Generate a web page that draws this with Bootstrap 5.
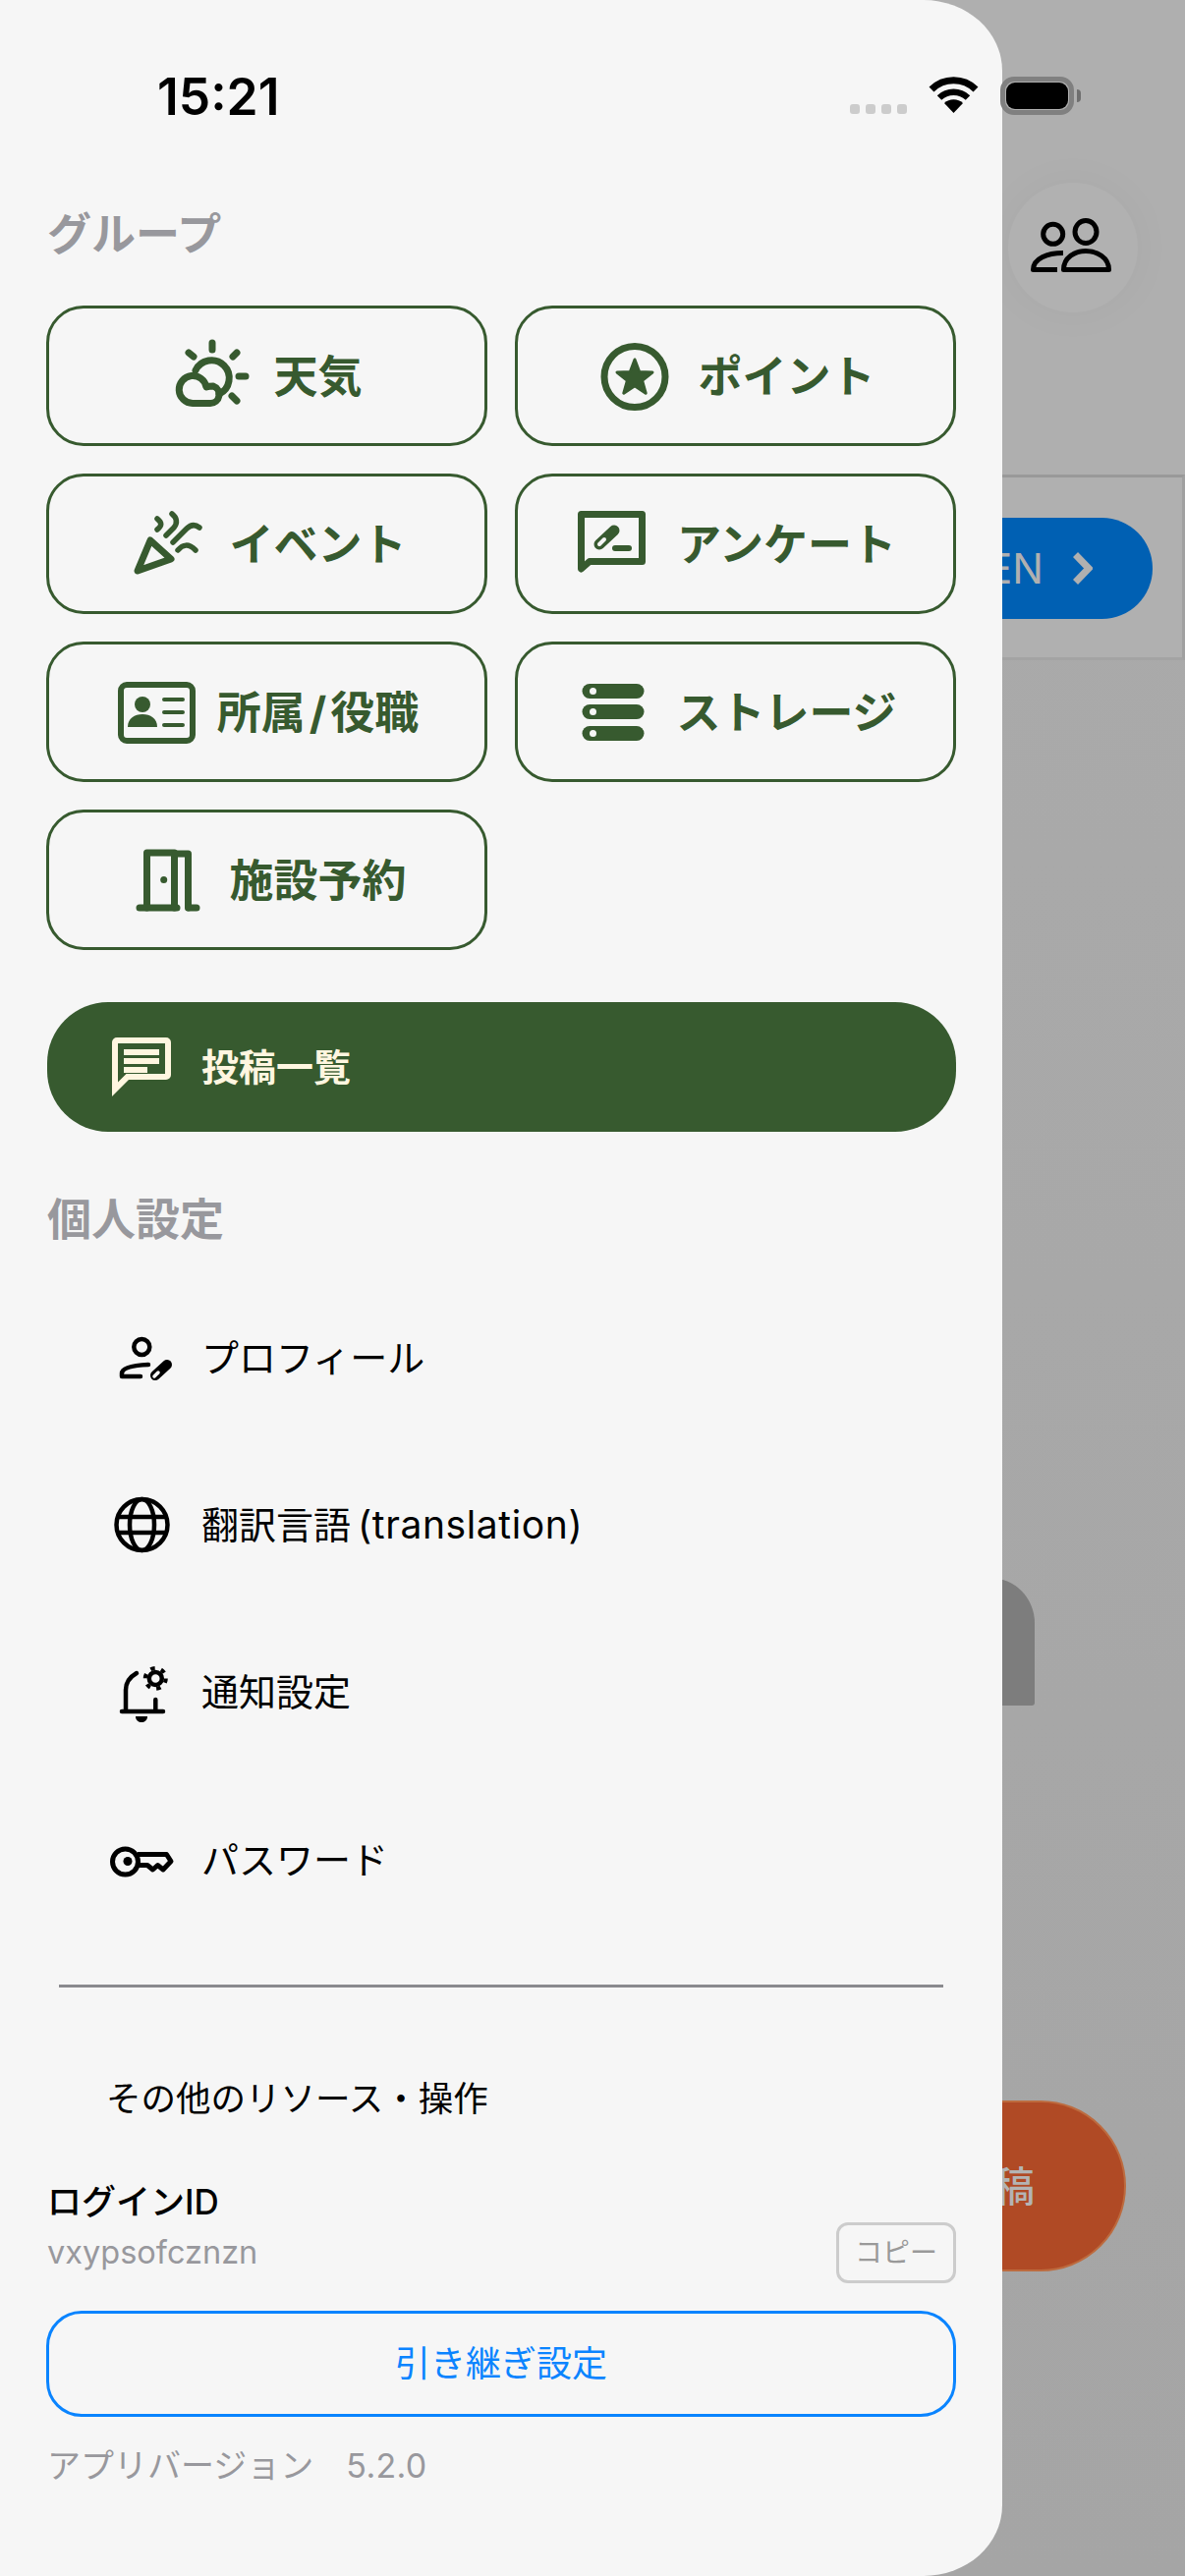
<!DOCTYPE html>
<html lang="ja">
<head>
<meta charset="utf-8">
<title>メニュー</title>
<link href="https://cdn.jsdelivr.net/npm/bootstrap@5.3.0/dist/css/bootstrap.min.css" rel="stylesheet">
<style>
:root{--forest:#375a2f;--cream:#fff6e0;--mute:#98989d;--sheet:#f6f6f6}
html,body{height:100%}
body{font-family:Inter,"Noto Sans CJK JP",sans-serif;background:linear-gradient(#ababab,#a5a5a5);overflow:hidden;color:#000}
.under{height:2622px}
.under-top{height:483px;background:#afafaf;padding-top:186px}
.round-btn{width:132px;height:132px;margin-left:1026px;border-radius:50%;background:#b1b1b1;box-shadow:0 0 50px rgba(0,0,0,.03)}
.band{height:189px;background:#b0b0b0;border-top:3px solid #999;border-right:3px solid #a0a0a0;border-bottom:3px solid #a3a3a3;padding:41px 30px 0 0}
.open-pill{height:103px;margin-left:800px;border-radius:52px;background:#0060b3;color:#b0b0b0;font-size:42px;padding-right:61px;gap:30px}
.tab-shape{width:200px;height:130px;margin:934px 0 0 853px;background:#7d7d7d;border-radius:0 45px 3px 0/0 46px 3px 0}
.post-pill{height:174px;width:446px;margin:402px 0 0 700px;background:#b04a25;border:2px solid #bd6b3f;border-radius:88px;color:#b4b4b4;font-size:42px;font-weight:500;padding-right:91px}
.sheet.offcanvas{--bs-offcanvas-width:1020px;background:var(--sheet);border:0;border-radius:0 80px 80px 0/0 72px 72px 0;color:#000;transition:none}
.sheet .offcanvas-body{padding:209px 33px 0 47px;overflow:hidden}
.status{z-index:1050;height:196px;padding:78px 106px 0 160px}
.clock{font-size:51.500px;font-weight:600;line-height:40px}
.dots{gap:6px;margin-top:28px}
.dots i{display:block;width:10px;height:10px;border-radius:3px;background:#ccc}
.wifi{margin-left:22px}
.batt{width:75px;height:39px;border:5px solid #808080;border-radius:14px;padding:1px;margin-left:22px}
.batt i{display:block;height:100%;background:#000;border-radius:9px}
.nub{width:4px;height:13px;margin:13px 0 0 3px;background:#6f6f6f;border-radius:0 6px 6px 0}
.sect{font-size:45px;font-weight:700;line-height:60px;color:var(--mute);margin:0 0 0 1px}
.tiles{display:grid;grid-template-columns:449px 449px;gap:28px;margin-top:42px}
.tile.btn{height:143px;border:3px solid var(--forest);border-radius:38px;color:var(--forest);background:transparent;font-size:45px;font-weight:700;line-height:60px;gap:21px;padding:3px 0 0;white-space:nowrap}
.tile.btn svg{margin:-3px 0 0 3px}
.slash{margin:0 4px}
.main-pill.btn{height:132px;margin:53px 0 0 1px;width:925px;border:0;border-radius:62px;background:var(--forest);color:var(--cream);font-size:38px;font-weight:700;padding:0 0 0 56px;gap:21px;justify-content:flex-start}
.sect-two{margin-top:60px}
.setting.nav-link{height:170.3px;padding:0 0 0 57px;gap:21px;font-size:38px;color:#000;font-weight:400}
.setting-list{margin-top:25px}
.latin{font-size:39px;letter-spacing:.6px;margin-left:7px}
.rule{height:3px;width:900px;margin:42px 0 0 13px;background:#8a8a8e;border:0;opacity:1}
.more{font-size:35.500px;line-height:60px;margin:84px 0 0 61px}
.lbl{font-size:35px;font-weight:500;line-height:42px;margin:53px 0 0 1px}
.id-row{width:926px;height:62px;padding-left:1px}
.id-txt{font-size:32.500px;color:var(--mute)}
.copy.btn{width:122px;height:62px;padding:0;border:3px solid #ccc;border-radius:12px;font-size:28px;color:#999;background:transparent}
.carry.btn{width:926px;height:108px;margin-top:28px;border:3px solid #0a84ff;border-radius:36px;color:#0a84ff;font-size:36px;background:transparent}
.ver{font-size:34px;line-height:50px;margin:25px 0 0 1px;color:var(--mute)}
.ver-num{margin-left:33px;letter-spacing:.3px}
svg{flex:none;display:block}
</style>
</head>
<body>

<div class="under">
  <div class="under-top">
    <div class="round-btn d-flex">
      <svg width="132" height="132" viewBox="0 0 132 132" fill="none" stroke="#000" stroke-width="5" stroke-linejoin="round">
        <circle cx="45.7" cy="52.3" r="10"/><ellipse cx="79" cy="50" rx="11" ry="11.5"/>
        <path d="M56 71.5C40 71.5 25.5 77 25.5 88.5H50"/>
        <path d="M56.5 88.5C56.5 76 68 69.5 79 69.5S102.5 76 102.5 88.5Z"/>
      </svg>
    </div>
  </div>
  <div class="band">
    <div class="open-pill d-flex align-items-center justify-content-end">
      <span>OPEN</span>
      <svg width="20" height="33" viewBox="0 0 20 33" fill="none" stroke="#b0b0b0" stroke-width="7"><path d="M2.5 2.5L16 16.5 2.5 30.5"/></svg>
    </div>
  </div>
  <div class="tab-shape"></div>
  <div class="post-pill d-flex align-items-center justify-content-end">投稿</div>
</div>

<div class="offcanvas offcanvas-start show sheet" tabindex="-1" aria-label="メニュー" data-bs-backdrop="false" data-bs-scroll="true">
  <div class="offcanvas-body">
    <h2 class="sect">グループ</h2>
    <div class="tiles">
      <a class="btn tile d-flex align-items-center justify-content-center" href="#">
        <svg width="80" height="80" viewBox="0 0 80 80" fill="none" stroke="#375a2f" stroke-width="7" stroke-linecap="round" stroke-linejoin="round">
          <path d="M22 34A18 18 0 1 1 46 58"/>
          <path d="M19 67.5H37A9 9 0 0 0 40 50C38 50 36 50 33 51A14 14 0 1 0 19 67.5Z"/>
          <path d="M39 6V13M60 20L64 16M66 40H73M59 60L64 65M15 16L20 20"/>
        </svg><span>天気</span></a>
      <a class="btn tile d-flex align-items-center justify-content-center" href="#">
        <svg width="80" height="80" viewBox="0 0 80 80" fill="none" stroke="#375a2f">
          <circle cx="37" cy="40.5" r="31" stroke-width="7"/>
          <path fill="#375a2f" stroke-width="3" stroke-linejoin="round" d="M37 23L41.7 35.5 55 36 44.6 44.3 48.2 57.2 37 49.8 25.8 57.2 29.4 44.3 19 36 32.3 35.5Z"/>
        </svg><span>ポイント</span></a>
      <a class="btn tile d-flex align-items-center justify-content-center" href="#">
        <svg width="80" height="80" viewBox="0 0 80 80" fill="none" stroke="#375a2f" stroke-width="7" stroke-linecap="round" stroke-linejoin="round">
          <path d="M8 67L21 36 42 55Z"/>
          <path stroke-width="5.5" d="M28 14C33 18 33 21 28 25M43 9C48 13 49 18 45 23L37 31M71 23C66 19 62 20 58 24L44 38M49 46C54 40 60 39 67 46"/>
        </svg><span>イベント</span></a>
      <a class="btn tile d-flex align-items-center justify-content-center" href="#">
        <svg width="80" height="80" viewBox="0 0 80 80" fill="none" stroke="#375a2f" stroke-linecap="round" stroke-linejoin="round">
          <path stroke-width="7" d="M3.5 65V9.5H65.5V57.5H12Z"/>
          <path stroke-width="11" d="M22 40L37 26"/>
          <path stroke="#f6f6f6" stroke-width="4" d="M22 40L27 35"/>
          <path stroke-width="6" d="M38 44H52"/>
        </svg><span>アンケート</span></a>
      <a class="btn tile d-flex align-items-center justify-content-center" href="#">
        <svg width="80" height="80" viewBox="0 0 80 80" fill="#375a2f" stroke-linecap="round">
          <rect x="3" y="12" width="73" height="57" rx="6" fill="none" stroke="#375a2f" stroke-width="6"/>
          <circle cx="25" cy="32" r="8"/>
          <path d="M10 55C10 46 17 42 25 42S40 46 40 55Z"/>
          <path stroke="#375a2f" stroke-width="4" d="M47 27H66M47 40H66M47 53H66"/>
        </svg><span>所属<span class="slash">/</span>役職</span></a>
      <a class="btn tile d-flex align-items-center justify-content-center" href="#">
        <svg width="80" height="80" viewBox="0 0 80 80" fill="#375a2f">
          <rect x="5.500" y="11" width="63" height="15" rx="7.500"/><rect x="5.500" y="32" width="63" height="15" rx="7.500"/><rect x="5.500" y="54" width="63" height="15" rx="7.500"/>
          <circle cx="16.500" cy="18.500" r="3.500" fill="#f6f6f6"/><circle cx="16.500" cy="39.500" r="3.500" fill="#f6f6f6"/><circle cx="16.500" cy="61.500" r="3.500" fill="#f6f6f6"/>
        </svg><span>ストレージ</span></a>
      <a class="btn tile d-flex align-items-center justify-content-center" href="#">
        <svg width="80" height="80" viewBox="0 0 80 80" fill="none" stroke="#375a2f" stroke-width="7" stroke-linecap="round" stroke-linejoin="round">
          <path d="M17.500 68V12H45.500V68"/><path d="M47 13H59.500V68"/>
          <path d="M10 68H48M60 68H68"/>
          <circle cx="34.700" cy="39.500" r="3.500" fill="#375a2f" stroke="none"/>
        </svg><span>施設予約</span></a>
    </div>

    <a class="btn main-pill d-flex align-items-center" href="#">
      <svg width="80" height="80" viewBox="0 0 80 80" fill="#fff6e0">
        <path fill-rule="evenodd" d="M10 70V15a5 5 0 0 1 5-5H65a5 5 0 0 1 5 5V48a5 5 0 0 1-5 5H27ZM16 16V55.500L24.500 47H64V16Z"/>
        <rect x="22" y="22" width="36" height="6"/><rect x="22" y="31" width="36" height="6"/><rect x="22" y="40" width="24" height="6"/>
      </svg>投稿一覧</a>

    <h2 class="sect sect-two">個人設定</h2>

    <nav class="nav flex-column setting-list">
      <a class="nav-link setting d-flex align-items-center" href="#">
        <svg width="80" height="80" viewBox="0 0 80 80" fill="none" stroke="#000" stroke-width="4.500" stroke-linecap="round" stroke-linejoin="round">
          <circle cx="40.300" cy="29" r="8"/>
          <path d="M47 47C36 47.500 20 49 20 56V59H39"/>
          <path stroke-width="10" d="M54 58L66 47"/>
          <path stroke="#f6f6f6" stroke-width="3.500" d="M53 59L57 55"/>
        </svg><span>プロフィール</span></a>
      <a class="nav-link setting d-flex align-items-center" href="#">
        <svg width="80" height="80" viewBox="0 0 80 80" fill="none" stroke="#000" stroke-width="4.500">
          <circle cx="40.500" cy="40" r="26"/><ellipse cx="40.500" cy="40" rx="12.500" ry="26"/>
          <path d="M15 32H66M15 48H66"/>
        </svg><span>翻訳言語<span class="latin">(translation)</span></span></a>
      <a class="nav-link setting d-flex align-items-center" href="#">
        <svg width="80" height="80" viewBox="0 0 80 80" fill="none" stroke="#000" stroke-width="4.500" stroke-linecap="round">
          <path d="M35 20C28 24 24 29 24 37V59M20 59H62M54.300 47V59"/>
          <path fill="#000" stroke="none" d="M34 64H46C46 72 34 72 34 64Z"/>
          <circle cx="54.300" cy="25.400" r="6.500"/>
          <circle cx="54.300" cy="25.400" r="10.500" stroke-width="4" stroke-linecap="butt" stroke-dasharray="4.500 6.500"/>
        </svg><span>通知設定</span></a>
      <a class="nav-link setting d-flex align-items-center" href="#">
        <svg width="80" height="80" viewBox="0 0 80 80" fill="none" stroke="#000" stroke-width="5" stroke-linejoin="round">
          <circle cx="23.500" cy="42" r="13"/><circle cx="26" cy="41.500" r="4.500" fill="#000" stroke="none"/>
          <path d="M36 34.500H65.500L70 41.500 62 50 56.500 45.500 51.500 50 46 45.500H36"/>
        </svg><span>パスワード</span></a>
    </nav>

    <hr class="rule">
    <div class="more">その他のリソース・操作</div>
    <div class="lbl">ログインID</div>
    <div class="id-row d-flex align-items-center justify-content-between">
      <span class="id-txt">vxypsofcznzn</span>
      <button class="btn copy" type="button">コピー</button>
    </div>
    <button class="btn carry d-block" type="button">引き継ぎ設定</button>
    <div class="ver">アプリバージョン<span class="ver-num">5.2.0</span></div>
  </div>
</div>

<div class="status position-absolute top-0 start-0 end-0 d-flex align-items-start">
  <div class="clock">15:21</div>
  <div class="dots d-flex ms-auto"><i></i><i></i><i></i><i></i></div>
  <svg class="wifi" width="51" height="37" viewBox="0 0 51 37" fill="none" stroke="#000">
    <path stroke-width="7" d="M3 13A32 32 0 0 1 48 13"/>
    <path stroke-width="6.500" d="M11 21.500A21 21 0 0 1 40 21.500"/>
    <path fill="#000" stroke="none" d="M25.500 37L16 27A14 14 0 0 1 35 27Z"/>
  </svg>
  <div class="batt"><i></i></div>
  <div class="nub"></div>
</div>

<script src="https://cdn.jsdelivr.net/npm/bootstrap@5.3.0/dist/js/bootstrap.bundle.min.js"></script>
</body>
</html>
